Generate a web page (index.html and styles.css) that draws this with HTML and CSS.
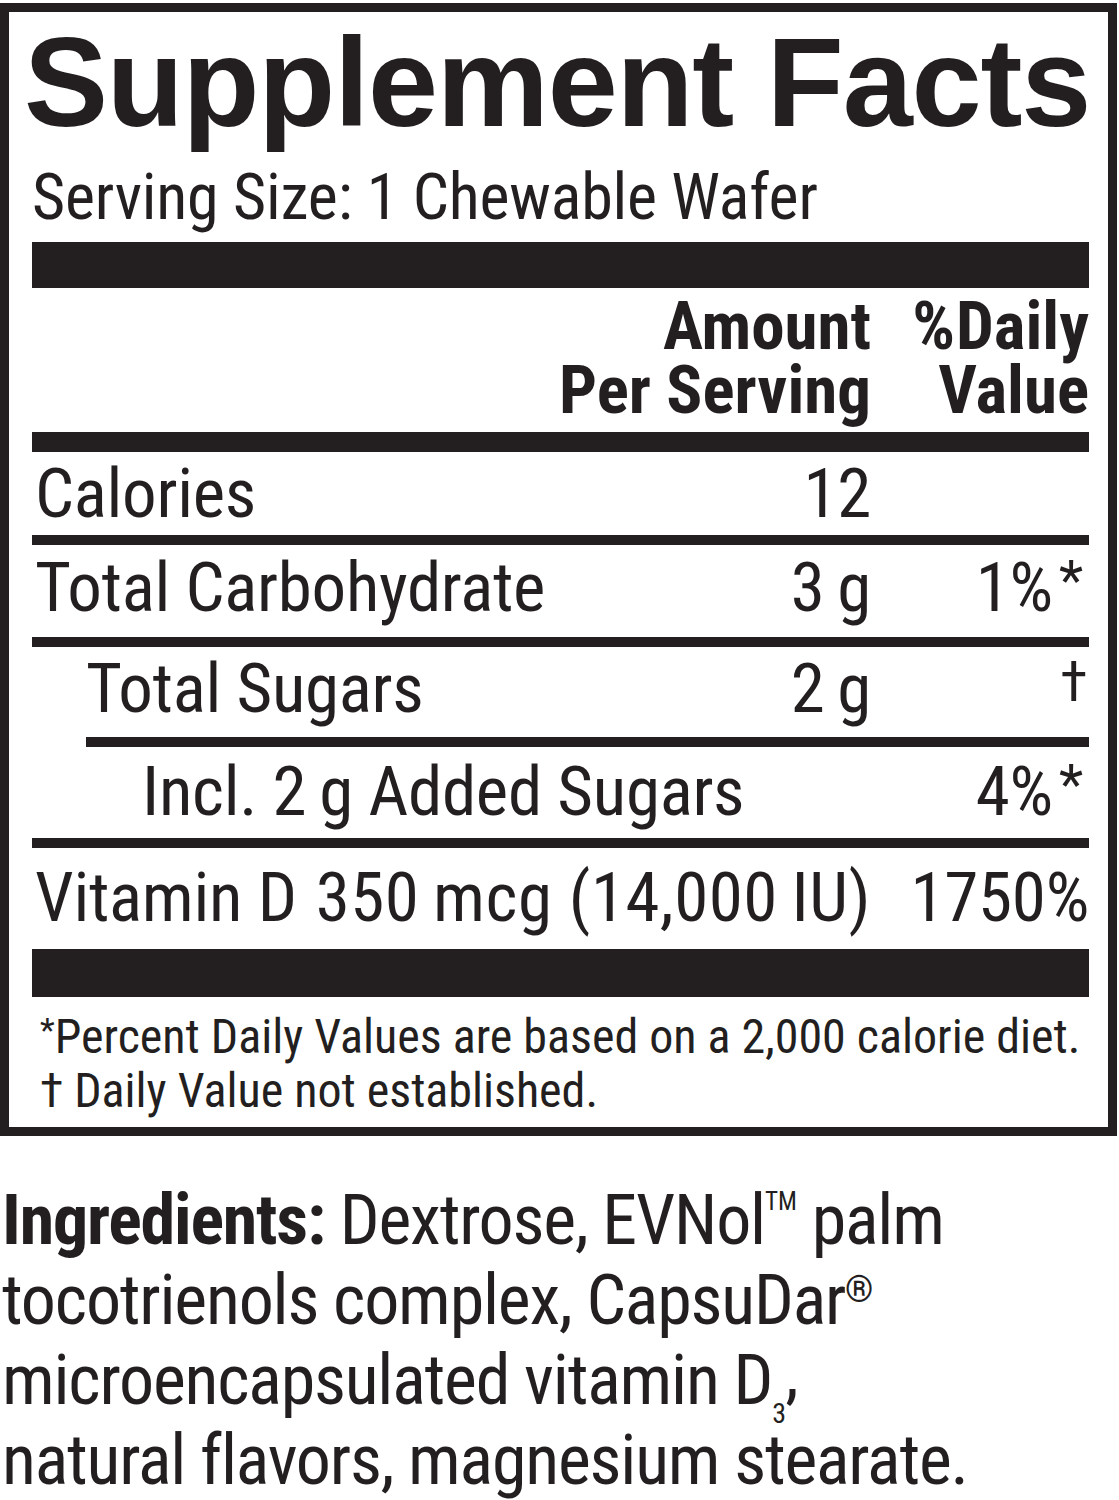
FILE: index.html
```html
<!DOCTYPE html>
<html lang="en">
<head>
<meta charset="utf-8">
<title>Supplement Facts</title>
<link rel="stylesheet" href="styles.css">
</head>
<body>
<div class="label">
  <h1 class="title">Supplement Facts</h1>
  <div class="serving">Serving Size: 1 Chewable Wafer</div>
  <div class="bar bar-thick"></div>
  <div class="head">
    <div class="head-amt">Amount<br>Per Serving</div>
    <div class="head-dv"><span class="pct">%</span>Daily<br>Value</div>
  </div>
  <div class="bar bar-med"></div>
  <div class="row row-cal"><span class="name">Calories</span><span class="amt">12</span><span class="dv"></span></div>
  <div class="bar bar-thin"></div>
  <div class="row row-carb"><span class="name">Total Carbohydrate</span><span class="amt">3&#8201;g</span><span class="dv">1%<span class="mark">*</span></span></div>
  <div class="bar bar-thin"></div>
  <div class="row row-sug"><span class="name indent1">Total Sugars</span><span class="amt">2&#8201;g</span><span class="dv"><span class="mark dagger">†</span></span></div>
  <div class="bar bar-thin bar-indent"></div>
  <div class="row row-add"><span class="name indent2">Incl. 2&#8201;g Added Sugars</span><span class="amt"></span><span class="dv">4%<span class="mark">*</span></span></div>
  <div class="bar bar-thin"></div>
  <div class="row row-vit"><span class="name">Vitamin D</span><span class="amt amt-wide">350&#8201;mcg (14,000&#8201;IU)</span><span class="dv">1750%</span></div>
  <div class="bar bar-thick2"></div>
  <div class="foot">
    <div class="foot-line"><span class="fmark">*</span>Percent Daily Values are based on a 2,000 calorie diet.</div>
    <div class="foot-line">† Daily Value not established.</div>
  </div>
</div>
<p class="ingredients"><b>Ingredients:</b> Dextrose, EVNol<sup class="tm">TM</sup> palm<br>tocotrienols complex, CapsuDar<sup class="reg">®</sup><br>microencapsulated vitamin D<sub class="sub3">3</sub><span class="apos">’</span><br>natural flavors, magnesium stearate.</p>
</body>
</html>
```

FILE: styles.css
```css
* { box-sizing: border-box; }
html, body { margin: 0; padding: 0; background: #fff; }
body {
  color: #231f20;
  font-family: Roboto, "Open Sans", sans-serif;
  font-stretch: 75%;
  width: 1119px;
}
.label {
  margin-top: 3px;
  width: 1117px;
  border: 9px solid #231f20;
  padding: 8px 19px 9px 23px;
}
.title {
  margin: 0 0 0 -8px;
  font-family: "Liberation Sans", Arial, sans-serif;
  font-stretch: normal;
  font-weight: 700;
  font-size: 126px;
  line-height: 126px;
  letter-spacing: -1.2px;
  white-space: nowrap;
}
.serving {
  margin-top: 20px;
  font-size: 64px;
  line-height: 64px;
  letter-spacing: -0.2px;
  white-space: nowrap;
}
.bar { background: #231f20; }
.bar-thick { height: 46px; margin-top: 12px; }
.bar-thick2 { height: 48px; }
.bar-med { height: 20px; }
.bar-thin { height: 10px; }
.bar-indent { margin-left: 54px; }
.head {
  height: 144px;
  padding-top: 6px;
  display: flex;
  justify-content: flex-end;
  font-weight: 700;
  font-size: 67px;
  font-stretch: 80%;
  line-height: 64px;
  text-align: right;
  white-space: nowrap;
}
.head-amt { flex: none; }
.head-dv { flex: none; width: 218px; }
.pct { letter-spacing: 1px; }
.row {
  display: flex;
  align-items: baseline;
  font-size: 69px;
  line-height: 70px;
  letter-spacing: -0.3px;
  white-space: nowrap;
}
.row-cal { height: 83px; padding-top: 7px; }
.row-carb { height: 92px; padding-top: 8px; }
.row-sug { height: 90px; padding-top: 7px; }
.row-add { height: 91px; padding-top: 10px; }
.row-vit { height: 101px; padding-top: 15px; }
.name { flex: 1 1 auto; padding-left: 3px; }
.indent1 { padding-left: 54px; }
.indent2 { padding-left: 110px; }
.amt { flex: none; text-align: right; }
.amt-wide { letter-spacing: 0.5px; }
.dv { flex: none; width: 218px; text-align: right; }
.mark {
  display: inline-block;
  width: 36px;
  text-align: center;
  vertical-align: top;
  font-size: 56px;
  line-height: 56px;
}
.dagger { text-align: right; padding-right: 2px; }
.foot {
  padding-top: 13px;
  padding-left: 8px;
  font-size: 48px;
  line-height: 54px;
  white-space: nowrap;
}
.fmark {
  font-size: 34px;
  vertical-align: top;
  line-height: 40px;
}
.ingredients {
  margin: 44px 0 0 2px;
  font-size: 70px;
  line-height: 80px;
  letter-spacing: -1.2px;
  white-space: nowrap;
}
.ingredients b { font-weight: 700; }
.tm {
  font-size: 25px;
  line-height: 0;
  vertical-align: 34px;
  letter-spacing: 0;
}
.reg {
  font-size: 36px;
  line-height: 0;
  vertical-align: 22px;
}
.sub3 {
  font-size: 28px;
  line-height: 0;
  vertical-align: -19px;
}
.apos {
  display: inline-block;
  line-height: 0;
  vertical-align: -38px;
  margin-left: 0;
}
```
